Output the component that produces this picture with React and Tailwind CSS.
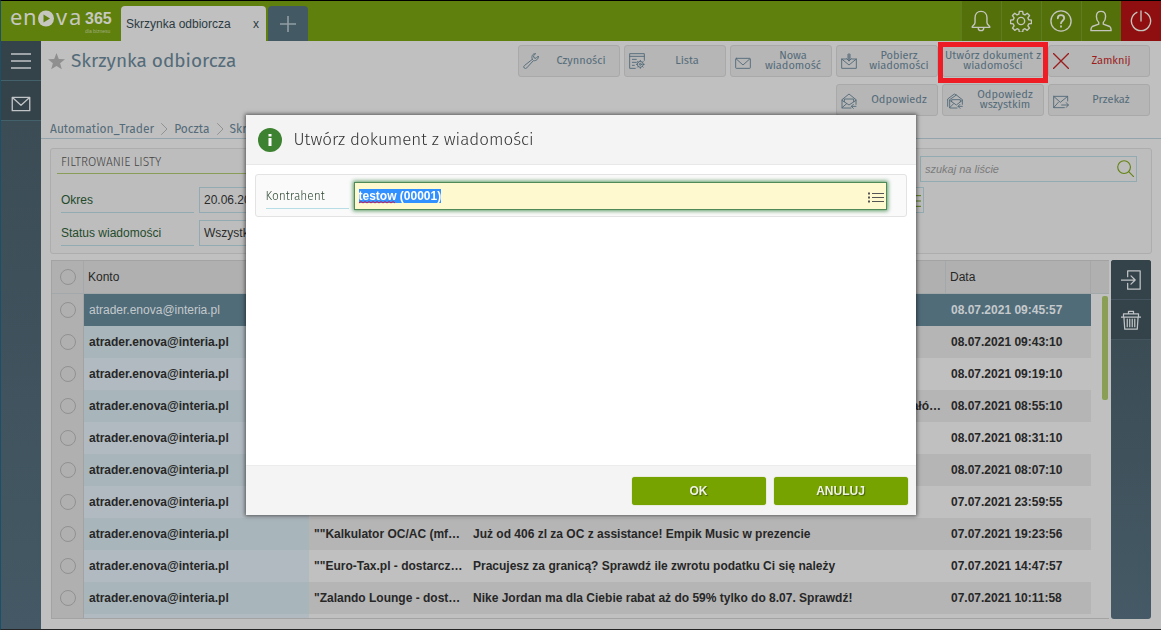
import { useEffect, useRef } from "react";

const HUMANIST = "font-['Fira_Sans','Noto_Sans',sans-serif]";

function Icon({ size = 20, children, className = "", stroke = 1 }) {
  return (
    <svg
      width={size}
      height={size}
      viewBox="0 0 24 24"
      fill="none"
      stroke="currentColor"
      strokeWidth={stroke}
      strokeLinecap="round"
      strokeLinejoin="round"
      className={`shrink-0 ${className}`}
      aria-hidden="true"
    >
      {children}
    </svg>
  );
}

const GEAR =
  "M10.2 1.5h3.6l.5 3 2 .9 2.5-1.8 2.5 2.5-1.8 2.5.9 2 3 .5v3.6l-3 .5-.9 2 1.8 2.5-2.5 2.5-2.5-1.8-2 .9-.5 3h-3.6l-.5-3-2-.9-2.5 1.8-2.5-2.5 1.8-2.5-.9-2-3-.5v-3.6l3-.5.9-2-1.8-2.5 2.5-2.5 2.5 1.8 2-.9z";

const icons = {
  wrench: (
    <path d="M14 9.500 2.200 18.800a2.500 2.500 0 1 0 3.500 3.500L15.500 11.500c4 .8 8-2.500 7.500-7l-3.500 3.500-3-.8-.8-3L19 1c-4.500-.5-7 4-5 8.500z" />
  ),
  list: (
    <>
      <path d="M9.5 23H1V1h22v10M1 5h22M5 9.500h6M5 14h6M5 18.500h3" />
      <circle cx="17" cy="17" r="4.500" />
      <circle cx="17" cy="17" r="1.500" />
      <path d="M17 11v1.500M17 21.500V23M11 17h1.500M21.500 17H23M12.800 12.800l1 1M20.200 20.200l1 1M21.200 12.800l-1 1M13.800 20.200l-1 1" />
    </>
  ),
  mail: <path d="M2 8h20a1 1 0 0 1 1 1v13a1 1 0 0 1-1 1H2a1 1 0 0 1-1-1V9a1 1 0 0 1 1-1zM2 9l10 9 10-9" />,
  download: (
    <path d="M8 9H1v14h22V9h-7M1 9l11 9 11-9M12 1v11M8.500 8.500 12 12l3.500-3.500M10.500 2v8M13.500 2v8" />
  ),
  reply: (
    <path d="M15 22.500H1.500V10L12 1.500 22.500 10v7M5 13v-4h14v4M1.500 11 12 18l10.500-7M1.500 22l7-6M22.500 20H16M18.500 17 15.500 20l3 3" />
  ),
  replyAll: (
    <path d="M15 22.500H4V10L14 3l9 7v7M4 11l10 7 9-7M7 13v-3h13v3M1 20V9L11 1.500l3 1.500M4 22l6-6M23 20h-6M19.500 17l-3 3 3 3" />
  ),
  forward: <path d="M17 22H1V5h21v7M1 5l10 9L22 5M1 22l7-8M13 18h10M20 14.500l3 3.500-3 3.500" />,
};

function ToolButton({ icon, children, danger, low }) {
  return (
    <button
      type="button"
      className={`flex h-8 items-center rounded-[3px] border border-[#a9a9a9] bg-[#b6b6b6] text-[11px] leading-[10px] ${
        danger ? "text-[#9c1c1c]" : "text-[#546b79]"
      }`}
    >
      {icon && (
        <span className={low ? "ml-1 mt-0.5" : "ml-1"}>
          <Icon size={16} stroke={1.4}>
            {icon}
          </Icon>
        </span>
      )}
      <span className={icon ? "flex-1 pl-1 text-center" : "flex-1 text-center"}>{children}</span>
    </button>
  );
}

function Logo() {
  return (
    <svg width="120" height="40" viewBox="0 0 120 40" role="img" aria-label="enova365 dla biznesu" className="shrink-0">
      <g fill="#c6c8c0" fontFamily="Noto Sans, sans-serif">
        <text x="9" y="24" fontSize="22">e</text>
        <text x="22" y="24" fontSize="22">n</text>
        <text x="55" y="24" fontSize="22">v</text>
        <text x="68" y="24" fontSize="22">a</text>
      </g>
      <g fill="#c6c8c0" fontFamily="Liberation Sans, Arial, sans-serif">
        <text x="84" y="23" fontSize="16" fontWeight="700">365</text>
        <text x="84" y="32" fontSize="5" opacity="0.6">dla biznesu</text>
      </g>
      <circle cx="45" cy="17.500" r="8" fill="#c6c8c0" />
      <path d="M42.500 13.500v8l6.500-4z" fill="#5f800d" />
    </svg>
  );
}

function TopButton({ label, children, power }) {
  return (
    <button
      type="button"
      aria-label={label}
      className={`flex h-10 w-10 items-center justify-center border-l pr-px text-[#c4c6bd] ${
        power ? "border-[#8f0f10] bg-[#8f0f10]" : "border-[#5f7c22] bg-[#53700b]"
      }`}
    >
      {children}
    </button>
  );
}

function Header() {
  return (
    <header className="flex h-10 shrink-0 items-end bg-[#5f800d]">
      <Logo />
      <div className="flex h-[35px] w-[145px] items-center justify-between rounded-t-[4px] bg-[#c0c0c0] pl-[5px] pr-[7px] text-[12px] text-[#2c3a42]">
        <span>Skrzynka odbiorcza</span>
        <button type="button" aria-label="Zamknij kartę">x</button>
      </div>
      <button
        type="button"
        aria-label="Nowa karta"
        className="ml-0.5 flex h-[35px] w-10 items-center justify-center rounded-t-[4px] bg-[#435964] text-[#929ea4]"
      >
        <Icon size={16} stroke={2.400}>
          <path d="M12 0v24M0 12h24" />
        </Icon>
      </button>
      <div className="ml-auto flex">
        <TopButton label="Powiadomienia">
          <Icon size={22} stroke={1.500}>
            <path d="M12 1.500c-4 0-6.500 3-6.500 7v5c0 2-1.500 3-3 4.500v1h19v-1c-1.500-1.500-3-2.500-3-4.500v-5c0-4-2.500-7-6.500-7zM9 19.500c0 4 6 4 6 0" />
          </Icon>
        </TopButton>
        <TopButton label="Ustawienia">
          <Icon size={22} stroke={1.500}>
            <path d={GEAR} />
            <circle cx="12" cy="12" r="4" />
          </Icon>
        </TopButton>
        <TopButton label="Pomoc">
          <Icon size={22} stroke={1.500}>
            <circle cx="12" cy="12" r="11" />
            <path d="M8.500 9c0-4.500 7-4.500 7 0 0 2.500-3.500 3-3.500 5.500M12 17.500v.8" strokeWidth="2" />
          </Icon>
        </TopButton>
        <TopButton label="Użytkownik">
          <Icon size={22} stroke={1.500}>
            <path d="M12 1.500c-3.500 0-5 2.500-5 5.500s1 5 2.500 6.500v2L2.500 18c-1 .5-1.500 2-1.500 4.500h22c0-2.500-.5-4-1.500-4.500l-7-2.500v-2C16 12 17 10 17 7s-1.500-5.500-5-5.500z" />
          </Icon>
        </TopButton>
        <TopButton label="Wyloguj" power>
          <Icon size={22} stroke={1.500}>
            <path d="M12 1v11M7.500 2.500a10.500 10.500 0 1 0 9 0" />
          </Icon>
        </TopButton>
      </div>
    </header>
  );
}

function SideNav() {
  const item = "flex h-10 w-full items-center justify-center border-b border-[#42616b] bg-[#344249] text-[#c0c4c6]";
  return (
    <nav className="w-10 shrink-0 bg-linear-to-b from-[#3a4a53] to-[#445965]">
      <button type="button" aria-label="Menu" className={item}>
        <Icon size={20} stroke={1.800}>
          <path d="M0 3.500h24M0 12h24M0 20.500h24" />
        </Icon>
      </button>
      <button type="button" aria-label="Poczta" className={item}>
        <Icon size={20} stroke={1.600} className="mt-1.5">
          <path d="M1.500 4h21v16h-21zM2 4.500l10 9 10-9" />
        </Icon>
      </button>
    </nav>
  );
}

function TitleBar() {
  return (
    <div className={`flex items-start justify-between pl-[7px] pr-[11px] pt-1 ${HUMANIST}`}>
      <div className="flex h-8 items-center gap-[6px]">
        <svg width="17" height="17" viewBox="0 0 24 24" fill="#8f8f8f" aria-hidden="true">
          <path d="m12 0 3.200 8.500 8.800.4-6.900 5.600L19.500 23 12 18.200 4.500 23l2.400-8.500L0 8.900l8.800-.4z" />
        </svg>
        <h1 className="text-[19px] leading-6 text-[#546b79]">Skrzynka odbiorcza</h1>
      </div>
      <div className="grid grid-cols-[repeat(6,102px)] gap-x-1 gap-y-[7px]">
        <ToolButton icon={icons.wrench}>Czynności</ToolButton>
        <ToolButton icon={icons.list}>Lista</ToolButton>
        <ToolButton icon={icons.mail}>Nowa wiadomość</ToolButton>
        <ToolButton icon={icons.download}>Pobierz wiadomości</ToolButton>
        <div className="relative grid">
          <ToolButton>
            Utwórz dokument z wiadomości
          </ToolButton>
          <div className="pointer-events-none absolute -inset-x-1 -bottom-1.5 -top-[3px] border-[5px] border-[#ee1c24]" />
        </div>
        <ToolButton danger icon={<path d="M0 0 24 24M24 0 0 24" strokeWidth="2" />}>
          Zamknij
        </ToolButton>
        <div className="col-span-3" />
        <ToolButton low icon={icons.reply}>Odpowiedz</ToolButton>
        <ToolButton low icon={icons.replyAll}>Odpowiedz wszystkim</ToolButton>
        <ToolButton low icon={icons.forward}>Przekaż</ToolButton>
      </div>
    </div>
  );
}

function Crumbs() {
  const sep = (
    <Icon size={12} stroke={2} className="text-[#929292]">
      <path d="m7 1 11 11L7 23" />
    </Icon>
  );
  return (
    <nav
      className={`mt-px flex h-[22px] items-center gap-1 border-b border-[#93a4ac] pl-[9px] pt-0.5 text-[12px] text-[#546b79] ${HUMANIST}`}
    >
      <a href="#trader">Automation_Trader</a>
      {sep}
      <a href="#poczta">Poczta</a>
      {sep}
      <a href="#skrzynka">Skrzynka</a>
    </nav>
  );
}

function FilterPanel() {
  const label = "flex h-[26px] items-center border-b border-[#92aab1] text-[12px] text-[#244b2c]";
  const field =
    "h-[26px] border border-[#92aab1] bg-transparent px-1 text-[12px] text-[#2b2b2b] outline-none appearance-none";
  return (
    <section className="ml-[9px] mr-[9px] mt-[9px] flex h-[106px] shrink-0 justify-between rounded-[3px] border border-[#adadad] bg-[#bdbdbd] pr-[14px]">
      <div className="min-w-0 flex-1 pl-[6px]">
        <h2
          className={`mr-2 h-[25px] border-b border-[#8a9d58] pl-1 pt-px text-[12px] font-light leading-6 text-[#444] ${HUMANIST}`}
        >
          FILTROWANIE LISTY
        </h2>
        <div className="-mr-1 mt-[13px] grid grid-cols-[133px_1fr] gap-x-[5px] gap-y-[7px] pl-1">
          <label htmlFor="okres" className={label}>Okres</label>
          <div className="relative grid">
            <input id="okres" readOnly defaultValue="20.06.2021...20.07.2021" className={field} />
            <Icon size={16} stroke={1.500} className="absolute right-[3px] top-[6px] text-[#557a12]">
              <path d="M4 4h20M4 12h20M4 20h20" />
            </Icon>
          </div>
          <label htmlFor="status" className={label}>Status wiadomości</label>
          <select id="status" className={`${field} w-60`}>
            <option>Wszystkie</option>
          </select>
        </div>
      </div>
      <div className="relative mt-[7px] h-[26px] w-[217px]">
        <input
          aria-label="szukaj na liście"
          placeholder="szukaj na liście"
          className="h-[26px] w-full border border-[#92aab1] bg-transparent pl-1 text-[11px] italic outline-none placeholder:text-[#7b7b7b]"
        />
        <Icon size={17} stroke={1.600} className="absolute right-[3px] top-1 text-[#638312]">
          <circle cx="10" cy="10" r="9" />
          <path d="m16.500 16.500 7 7" />
        </Icon>
      </div>
    </section>
  );
}

const rows = [
  { date: "08.07.2021 09:45:57" },
  { date: "08.07.2021 09:43:10" },
  { date: "08.07.2021 09:19:10" },
  { date: "08.07.2021 08:55:10", subject: "szczegałó…", end: true },
  { date: "08.07.2021 08:31:10" },
  { date: "08.07.2021 08:07:10" },
  { date: "07.07.2021 23:59:55" },
  {
    date: "07.07.2021 19:23:56",
    sender: '""Kalkulator OC/AC (mf…',
    subject: "Już od 406 zl za OC z assistance! Empik Music w prezencie",
  },
  {
    date: "07.07.2021 14:47:57",
    sender: '""Euro-Tax.pl - dostarcz…',
    subject: "Pracujesz za granicą? Sprawdź ile zwrotu podatku Ci się należy",
  },
  {
    date: "07.07.2021 10:11:58",
    sender: '"Zalando Lounge - dost…',
    subject: "Nike Jordan ma dla Ciebie rabat aż do 59% tylko do 8.07. Sprawdź!",
  },
  {},
];

const ROUND_CHECK =
  "block size-4 appearance-none rounded-full border border-[#919191] bg-transparent mx-auto";

function MailTable() {
  const th = "border-b border-r border-[#a3a8ab] px-1 text-left font-normal";
  return (
    <div className="flex min-w-0 flex-1 overflow-hidden border border-[#a3a3a3] border-r-0">
      <table className="w-full flex-1 table-fixed self-start border-separate border-spacing-0 text-[12px] text-[#272727]">
        <colgroup>
          <col className="w-8" />
          <col className="w-[225px]" />
          <col className="w-[159px]" />
          <col />
          <col className="w-[145px]" />
        </colgroup>
        <thead>
          <tr className="h-[33px] bg-[#b0b0b0]">
            <th className={th}>
              <input type="checkbox" aria-label="Zaznacz wszystkie" className={ROUND_CHECK} />
            </th>
            <th className={th}>Konto</th>
            <th className={th}>Nadawca</th>
            <th className={th}>Temat</th>
            <th className={th}>Data</th>
          </tr>
        </thead>
        <tbody>
          {rows.map((r, i) => {
            const selected = i === 0;
            const bg = selected ? "bg-[#506c79] text-[#c4c9cc]" : i % 2 ? "bg-[#b5b5b5]" : "bg-[#c0c0c0]";
            const account = selected ? "" : i % 2 ? "bg-[#a8b5ba] font-bold" : "bg-[#b1bac0] font-bold";
            return (
              <tr key={i} className={`h-8 ${bg}`}>
                <td className="border-r border-[#a3a3a3] bg-[#b0b0b0]">
                  <input type="checkbox" aria-label={`Wiadomość ${i + 1}`} className={ROUND_CHECK} />
                </td>
                <td className={`truncate px-[5px] ${account}`}>{r.date && "atrader.enova@interia.pl"}</td>
                <td className="truncate pl-[5px] font-bold">{r.sender}</td>
                <td className={`truncate px-[5px] font-bold ${r.end ? "text-right" : ""}`}>{r.subject}</td>
                <td className="px-[5px] font-bold">{r.date}</td>
              </tr>
            );
          })}
        </tbody>
      </table>
      <div className="w-[18px] shrink-0">
        <div className="h-[33px] border-b border-[#a3a8ab] bg-[#b0b0b0]" />
        <div className="ml-[11px] mt-0.5 h-[104px] w-1.5 rounded-[2px] bg-[#8a9f55]" />
      </div>
    </div>
  );
}

function ActionRail() {
  const item = "flex h-10 w-full items-center justify-center border-b border-[#43545e] bg-[#344249] text-[#c0c4c6]";
  return (
    <aside className="ml-0.5 w-10 shrink-0 overflow-hidden rounded-[3px] bg-linear-to-b from-[#384850] to-[#455a66]">
      <button type="button" aria-label="Otwórz" className={item}>
        <Icon size={20} stroke={1.500}>
          <path d="M8 8V1h15v22H8v-7M0 12h17M12 7l5 5-5 5" />
        </Icon>
      </button>
      <button type="button" aria-label="Usuń" className={item}>
        <Icon size={20} stroke={1.500}>
          <path d="M0 8.500h24M3 8.500V4.500h18v4M9 4.500V1.500h6v3M3.500 8.500 4.500 23h15l1-14.500M7.500 11v9M10.500 11v9M13.500 11v9M16.500 11v9" />
        </Icon>
      </button>
    </aside>
  );
}

function Dialog() {
  const ref = useRef(null);
  useEffect(() => {
    ref.current.focus();
    ref.current.select();
  }, []);
  const action =
    "h-7 w-[134px] rounded-[3px] bg-[#76a300] text-[12px] font-bold text-[#eef2e4] [text-shadow:1px_1px_1px_rgba(0,0,0,0.4)] shadow-[0_0_1px_#76a300]";
  return (
    <div className="fixed inset-0 flex items-center justify-center">
      <div
        role="dialog"
        aria-modal="true"
        aria-labelledby="dialog-title"
        className="flex min-h-[400px] w-[670px] flex-col bg-white shadow-[0_0_4px_1px_rgba(0,0,0,0.55)]"
      >
        <header className="flex h-[50px] items-center gap-3 border-b border-[#e8e8e8] bg-[#f4f4f4] px-3">
          <svg width="24" height="24" viewBox="0 0 24 24" aria-hidden="true">
            <circle cx="12" cy="12" r="12" fill="#3c8230" />
            <path d="M10.500 6h3v2.500h-3zM10.500 10h3v8h-3z" fill="#fff" />
          </svg>
          <h2 id="dialog-title" className={`text-[17px] font-light leading-6 text-[#333] ${HUMANIST}`}>
            Utwórz dokument z wiadomości
          </h2>
        </header>
        <div className="flex-1 px-[9px] pt-[9px]">
          <div className="flex h-[43px] items-center gap-[5px] rounded-[3px] border border-[#e3e3e3] bg-[#fafafa] pl-[10px] pr-[19px]">
            <label
              htmlFor="kontrahent"
              className={`flex h-[26px] w-[83px] items-center border-b border-[#b7dde6] pt-0.5 text-[12px] font-light text-[#2f4a34] ${HUMANIST}`}
            >
              Kontrahent
            </label>
            <div className="relative flex-1">
              <input
                id="kontrahent"
                ref={ref}
                spellCheck={false}
                defaultValue="testow (00001)"
                className="block h-7 w-full border border-[#4f8a58] bg-[#fff9d0] pl-1 pr-7 text-[12px] font-bold text-[#222] shadow-[0_0_4px_1px_#5d9a66] outline-none selection:bg-[#3390ff] selection:text-white"
              />
              <svg width="36" height="3" viewBox="0 0 36 3" className="absolute bottom-[6px] left-[5px]" aria-hidden="true">
                <path
                  d="M0 2l2-1.500 2 1.500 2-1.500 2 1.500 2-1.500 2 1.500 2-1.500 2 1.500 2-1.500 2 1.500 2-1.500 2 1.500 2-1.500 2 1.500 2-1.500 2 1.500 2-1.500 2 1.500"
                  fill="none"
                  stroke="#d2184a"
                />
              </svg>
              <button type="button" aria-label="Wybierz z listy" className="absolute right-[3px] top-[10px] text-[#555]">
                <svg width="16" height="12" viewBox="0 0 16 12" stroke="currentColor" aria-hidden="true">
                  <path d="M4 1.500h12M4 5.500h12M4 9.500h12" />
                  <path d="M0 1.500h2M0 5.500h2M0 9.500h2" strokeWidth="2" />
                </svg>
              </button>
            </div>
          </div>
        </div>
        <footer className="flex h-[50px] items-center justify-end gap-2 border-t border-[#ececec] bg-[#f4f4f4] px-2">
          <button type="button" className={action}>OK</button>
          <button type="button" className={action}>ANULUJ</button>
        </footer>
      </div>
    </div>
  );
}

export default function App() {
  return (
    <div className="flex h-screen flex-col overflow-hidden border-b border-l border-t border-b-[#252525] border-l-[#1b5068] border-t-black bg-[#c0c0c0] font-['Liberation_Sans',Arial,sans-serif]">
      <Header />
      <div className="flex min-h-0 flex-1">
        <SideNav />
        <main className="flex min-w-0 flex-1 flex-col">
          <TitleBar />
          <Crumbs />
          <FilterPanel />
          <div className="mb-[10px] ml-[10px] mr-[10px] mt-1.5 flex min-h-0 flex-1">
            <MailTable />
            <ActionRail />
          </div>
        </main>
      </div>
      <Dialog />
    </div>
  );
}
